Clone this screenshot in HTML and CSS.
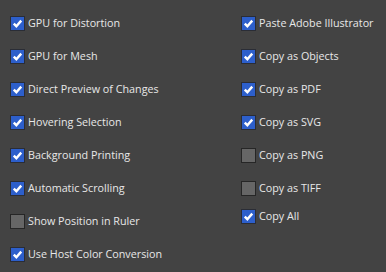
FILE: index.html
```html
<!DOCTYPE html>
<html>
<head>
<meta charset="utf-8">
<link rel="stylesheet" href="styles.css">
</head>
<body>
<div class="panel">
  <div class="col left">
    <label class="opt"><span class="box on"><svg viewBox="0 0 15 15"><path d="M3.2 7.6 L6.2 10.6 L11.8 4.2" /></svg></span><span class="lbl">GPU for Distortion</span></label>
    <label class="opt"><span class="box on"><svg viewBox="0 0 15 15"><path d="M3.2 7.6 L6.2 10.6 L11.8 4.2" /></svg></span><span class="lbl">GPU for Mesh</span></label>
    <label class="opt"><span class="box on"><svg viewBox="0 0 15 15"><path d="M3.2 7.6 L6.2 10.6 L11.8 4.2" /></svg></span><span class="lbl">Direct Preview of Changes</span></label>
    <label class="opt"><span class="box on"><svg viewBox="0 0 15 15"><path d="M3.2 7.6 L6.2 10.6 L11.8 4.2" /></svg></span><span class="lbl">Hovering Selection</span></label>
    <label class="opt"><span class="box on"><svg viewBox="0 0 15 15"><path d="M3.2 7.6 L6.2 10.6 L11.8 4.2" /></svg></span><span class="lbl">Background Printing</span></label>
    <label class="opt"><span class="box on"><svg viewBox="0 0 15 15"><path d="M3.2 7.6 L6.2 10.6 L11.8 4.2" /></svg></span><span class="lbl">Automatic Scrolling</span></label>
    <label class="opt"><span class="box"></span><span class="lbl">Show Position in Ruler</span></label>
    <label class="opt"><span class="box on"><svg viewBox="0 0 15 15"><path d="M3.2 7.6 L6.2 10.6 L11.8 4.2" /></svg></span><span class="lbl">Use Host Color Conversion</span></label>
  </div>
  <div class="col right">
    <label class="opt"><span class="box on"><svg viewBox="0 0 15 15"><path d="M3.2 7.6 L6.2 10.6 L11.8 4.2" /></svg></span><span class="lbl">Paste Adobe Illustrator</span></label>
    <label class="opt"><span class="box on"><svg viewBox="0 0 15 15"><path d="M3.2 7.6 L6.2 10.6 L11.8 4.2" /></svg></span><span class="lbl">Copy as Objects</span></label>
    <label class="opt"><span class="box on"><svg viewBox="0 0 15 15"><path d="M3.2 7.6 L6.2 10.6 L11.8 4.2" /></svg></span><span class="lbl">Copy as PDF</span></label>
    <label class="opt"><span class="box on"><svg viewBox="0 0 15 15"><path d="M3.2 7.6 L6.2 10.6 L11.8 4.2" /></svg></span><span class="lbl">Copy as SVG</span></label>
    <label class="opt"><span class="box"></span><span class="lbl">Copy as PNG</span></label>
    <label class="opt"><span class="box"></span><span class="lbl">Copy as TIFF</span></label>
    <label class="opt short"><span class="box on"><svg viewBox="0 0 15 15"><path d="M3.2 7.6 L6.2 10.6 L11.8 4.2" /></svg></span><span class="lbl">Copy All</span></label>
  </div>
</div>
</body>
</html>
```
FILE: styles.css
```css
html, body {
  margin: 0;
  padding: 0;
  background: #434343;
  width: 386px;
  height: 272px;
  overflow: hidden;
}
.panel {
  display: flex;
  padding: 7px 0 0 10px;
  font-family: "Open Sans", "Noto Sans", sans-serif;
  font-size: 10.75px;
  color: #e8e8e8;
}
.col {
  display: flex;
  flex-direction: column;
}
.left {
  width: 231px;
}
.opt {
  display: flex;
  align-items: center;
  height: 33px;
}
.opt.short {
  margin-top: -5px;
}
.box {
  box-sizing: border-box;
  width: 15px;
  height: 15px;
  border: 1px solid #262626;
  background: #666666;
  margin-right: 3px;
  display: flex;
}
.box.on {
  background: #2d5fcb;
  border-color: #2a2d36;
}
.box svg {
  width: 13px;
  height: 13px;
}
.box path {
  fill: none;
  stroke: #ffffff;
  stroke-width: 2.8;
  stroke-linecap: butt;
  stroke-linejoin: miter;
}
.lbl {
  white-space: nowrap;
  line-height: 15px;
}
```
